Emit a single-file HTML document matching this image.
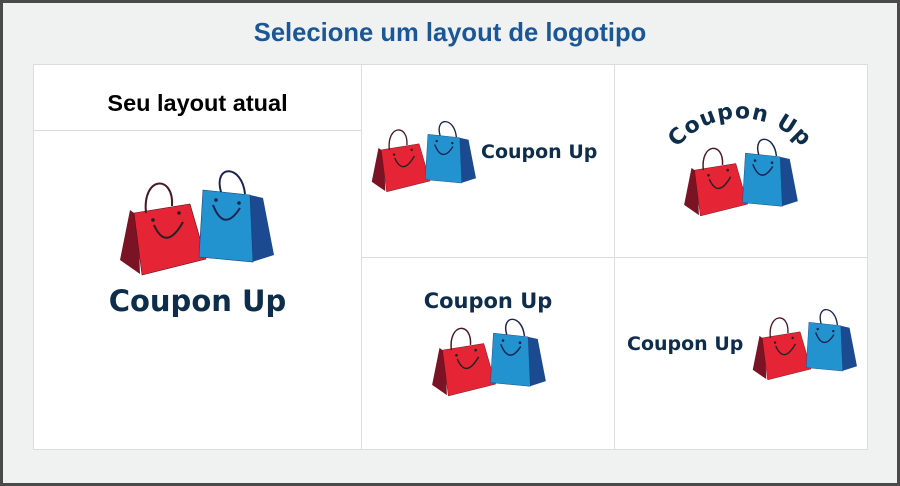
<!DOCTYPE html>
<html><head><meta charset="utf-8"><style>
*{margin:0;padding:0;box-sizing:border-box}
body{width:900px;height:486px;background:#4a4a4a;position:relative;overflow:hidden;font-family:"Liberation Sans",sans-serif}
#dlg{position:absolute;left:3px;top:3px;width:894px;height:480px;background:#f0f1f1}
.t{position:absolute;white-space:nowrap;font-weight:bold}
.cu{font-family:"DejaVu Sans",sans-serif;color:#0d2d4a;font-weight:bold;position:absolute;white-space:nowrap}
.cell{position:absolute;background:#fff;border:1px solid #dcdcdc}
svg.b{position:absolute}
</style></head><body>
<div id="dlg"></div>
<div class="t" style="left:0;width:900px;text-align:center;top:19px;font-size:25.6px;color:#1b5797">Selecione um layout de logotipo</div>
<div class="cell" style="left:33px;top:64px;width:329px;height:386px"></div>
<div style="position:absolute;left:34px;top:130px;width:327px;height:1px;background:#dcdcdc"></div>
<div class="cell" style="left:361px;top:64px;width:254px;height:194px"></div>
<div class="cell" style="left:614px;top:64px;width:254px;height:194px"></div>
<div class="cell" style="left:361px;top:257px;width:254px;height:193px"></div>
<div class="cell" style="left:614px;top:257px;width:254px;height:193px"></div>
<div class="t" style="left:33px;width:329px;text-align:center;top:90px;font-size:23.5px;color:#000">Seu layout atual</div>

<svg width="0" height="0" style="position:absolute"><defs>
<g id="bag">
<polygon points="30,50 20,100 40,114 38,56" fill="#7a1425"/>
<polygon points="34,53 90,44 106,99 42,115" fill="#e52535" stroke="#5a0d18" stroke-width="0.6"/>
<path d="M46,53 C42,16 74,14 72,46" fill="none" stroke="#4a1a24" stroke-width="2"/>
<circle cx="53" cy="60" r="1.8" fill="#222"/><circle cx="79" cy="53" r="1.8" fill="#222"/>
<path d="M54,65 Q66,92 83,62" fill="none" stroke="#222" stroke-width="2"/>
<polygon points="150,35 163,38 174,95 152,102" fill="#1c4a90"/>
<polygon points="103,30 150,35 153,102 99,97" fill="#2393cf" stroke="#143f7a" stroke-width="0.6"/>
<path d="M121,32 C113,4 142,4 145,34" fill="none" stroke="#1a2450" stroke-width="2"/>
<circle cx="116" cy="40" r="1.8" fill="#1a2450"/><circle cx="139" cy="43" r="1.8" fill="#1a2450"/>
<path d="M113,45 Q124,73 140,48" fill="none" stroke="#1a2450" stroke-width="2"/>
</g></defs></svg>

<svg class="b" style="left:100px;top:160px" width="190" height="130" viewBox="0 0 190 130"><use href="#bag"/></svg>
<div class="cu" style="left:33px;width:329px;text-align:center;top:284px;font-size:29px">Coupon Up</div>

<svg class="b" style="left:358px;top:114px" width="129" height="88" viewBox="0 0 190 130"><use href="#bag"/></svg>
<div class="cu" style="left:481px;top:141px;font-size:19px">Coupon Up</div>

<svg class="b" style="left:669px;top:131px" width="141" height="96" viewBox="0 0 190 130"><use href="#bag"/></svg>
<svg class="b" style="left:614px;top:64px" width="254" height="150" viewBox="614 64 254 150">
<path id="arc" d="M662,175 A82,82 0 0 1 818,175" fill="none"/>
<text font-family="DejaVu Sans" font-weight="bold" font-size="22" fill="#0d2d4a" letter-spacing="1" text-anchor="middle"><textPath href="#arc" startOffset="50%">Coupon Up</textPath></text>
</svg>

<div class="cu" style="left:361px;width:254px;text-align:center;top:289px;font-size:21px">Coupon Up</div>
<svg class="b" style="left:417px;top:311px" width="141" height="96" viewBox="0 0 190 130"><use href="#bag"/></svg>

<div class="cu" style="left:627px;top:333px;font-size:19px">Coupon Up</div>
<svg class="b" style="left:739px;top:302px" width="129" height="88" viewBox="0 0 190 130"><use href="#bag"/></svg>
</body></html>
